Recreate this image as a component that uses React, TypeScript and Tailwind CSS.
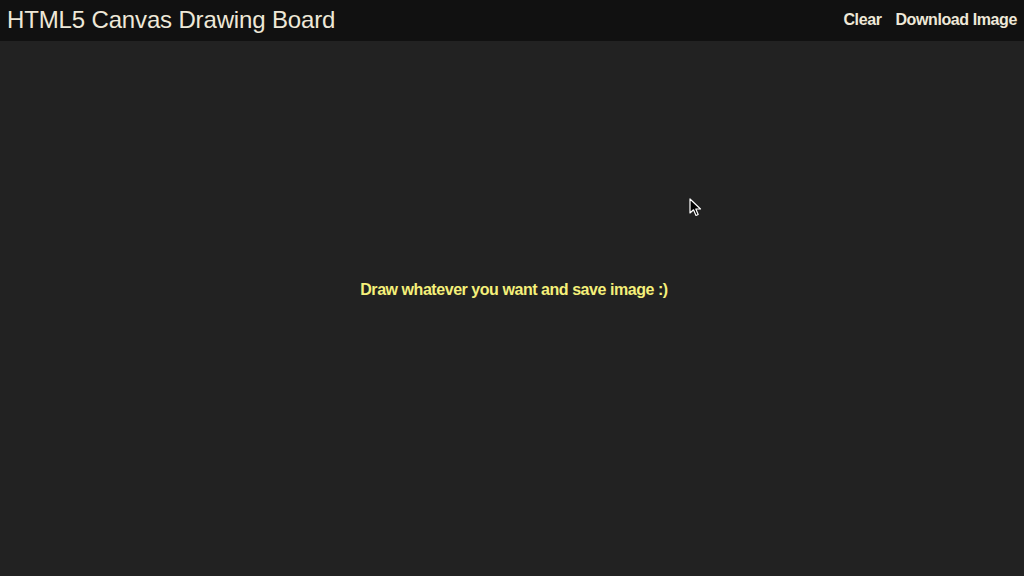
const Cursor = () => (
  <svg width="14" height="20" viewBox="0 0 14 20" className="absolute left-[689px] top-[198px]">
    <path d="M1 1 L1 15 L4.5 11.8 L7 17.5 L9.2 16.5 L6.8 11 L11.5 11 Z" fill="#000" stroke="#fff" strokeWidth="1.2" strokeLinejoin="round" />
  </svg>
);

const App = () => {
  return (
    <div className="relative flex flex-col h-screen w-full bg-[#222222] font-['Liberation_Sans',Arial,sans-serif] overflow-hidden">
      <header className="flex items-center justify-between h-[41px] bg-[#111111] pl-[7px] pr-[7px]">
        <h1 className="text-[24px] leading-none text-[#eee8d8] tracking-[-0.15px] -mt-[1px]">HTML5 Canvas Drawing Board</h1>
        <div className="flex items-center gap-[14px] text-[16px] font-semibold text-[#eee8d8] -mt-[1px]">
          <button className="tracking-[-0.4px]">Clear</button>
          <button className="tracking-[-0.4px]">Download Image</button>
        </div>
      </header>
      <main className="flex-1 flex items-center justify-center pb-[37px] pl-[4px]">
        <p className="text-[16px] font-bold text-[#f5f07a] tracking-[-0.45px]">Draw whatever you want and save image :)</p>
      </main>
      <Cursor />
    </div>
  );
};

export default App;
